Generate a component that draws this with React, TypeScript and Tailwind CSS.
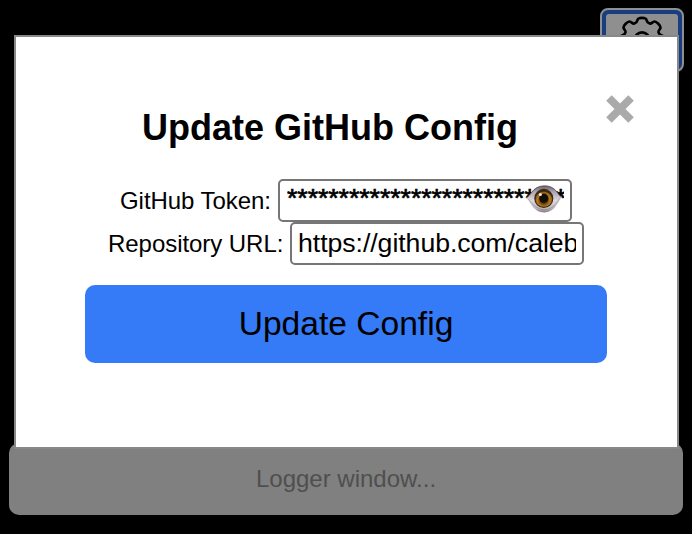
import React, { useState } from "react";

function GearIcon() {
  const quarter =
    "M24 1.8 C27.3 1.8 28.2 2.3 28.7 4.5 C29.1 6.6 30 7 31.6 7.5 C33.6 8.1 34.5 5.6 36.5 5.5 C38.5 5.4 42.6 9.5 42.5 11.5 C42.4 13.5 39.9 14.4 40.5 16.4 C41 18 41.4 18.9 43.5 19.3 C45.7 19.8 46.2 20.7 46.2 24";
  return (
    <svg viewBox="0 0 48 48" className="mt-[2px] h-12 w-12 shrink-0" fill="none" stroke="#000" strokeWidth="2.7" strokeLinejoin="round">
      <path d={quarter} />
      <path d={quarter} transform="rotate(90 24 24)" />
      <path d={quarter} transform="rotate(180 24 24)" />
      <path d={quarter} transform="rotate(270 24 24)" />
      <circle cx="24" cy="24" r="7.6" />
    </svg>
  );
}

function EyeIcon() {
  return (
    <svg viewBox="0 0 36 28" className="h-7 w-9">
      <defs>
        <linearGradient id="sclera" x1="0" y1="0" x2="0" y2="1">
          <stop offset="0" stopColor="#69626b" />
          <stop offset="0.22" stopColor="#aaa2ac" />
          <stop offset="0.55" stopColor="#ded8df" />
          <stop offset="0.85" stopColor="#bdb5bd" />
          <stop offset="1" stopColor="#827a82" />
        </linearGradient>
        <radialGradient id="iris" cx="0.5" cy="0.6" r="0.5">
          <stop offset="0.35" stopColor="#5c3208" />
          <stop offset="0.7" stopColor="#b57d1b" />
          <stop offset="0.88" stopColor="#94621a" />
          <stop offset="1" stopColor="#3d260c" />
        </radialGradient>
      </defs>
      <path d="M.3 13 Q3 11 5.5 7.5 Q10 1 18.5 .8 Q26.5 .8 31 7 Q33.3 10.7 35.5 12.4 Q34 15 31.5 18.8 Q26.5 27.4 18.5 27.4 Q10 27.4 5.4 20 Q3 16 .3 13Z" fill="url(#sclera)" />
      <path d="M.5 13 Q3 11 5.5 7.5 Q10 1 18.5 .8 Q26.5 .8 31 7 Q33.3 10.7 35.3 12.4" fill="none" stroke="#4f484f" strokeWidth=".8" />
      <path d="M2.5 14 Q9 24.5 18.5 24.8 Q28 24.5 33.5 13.5" fill="none" stroke="#8f828d" strokeWidth=".6" />
      <circle cx="17.8" cy="13.4" r="9" fill="url(#iris)" stroke="#3a2817" strokeWidth="1.1" />
      <circle cx="17.8" cy="13.2" r="4.6" fill="#150d09" />
      <circle cx="14.4" cy="9.6" r="1.5" fill="#f5eee5" />
    </svg>
  );
}

const inputClass =
  "h-[43px] w-[294px] rounded-[5px] border-2 border-[#767676] bg-white py-0 pr-[6px] text-[26.67px] leading-[30px] text-black outline-none";

export default function App() {
  const [token, setToken] = useState("*".repeat(40));
  const [url, setUrl] = useState("https://github.com/calebmwelsh");
  return (
    <div className="relative flex h-[534px] w-[692px] flex-col justify-between overflow-hidden bg-black pt-2 pr-2 pb-[19px] pl-[9px] font-['Liberation_Sans',Arial,sans-serif] text-black">
      <button className="flex h-16 w-[84px] justify-center self-end overflow-hidden rounded-[8px] border-2 border-[#909090] bg-[#183d80]">
        <span className="m-1 flex h-14 w-[72px] justify-center rounded-[3px] bg-[#8f8f8f]">
          <GearIcon />
        </span>
      </button>

      <div className="mr-px flex h-[72px] items-center justify-center rounded-[10px] bg-[#808080] text-2xl text-[#4f4f4f]">
        Logger window...
      </div>

      <div className="absolute top-[35px] left-[14px] flex h-[414px] w-[665px] flex-col border-2 border-[#888888] bg-white pr-[42px]">
        <div className="flex h-[142px] items-start pt-[58px]">
          <h2 className="ml-[126px] w-[376px] pt-[12px] text-[36px] leading-[42px] font-bold whitespace-nowrap">
            Update GitHub Config
          </h2>
          <button aria-label="Close" className="ml-[88px] h-7 w-7 shrink-0">
            <svg viewBox="0 0 28 28" className="h-7 w-7" fill="#aaaaaa">
              <path d="M5.7.2 14 8.5 22.3.2 27.8 5.7 19.5 14l8.3 8.3-5.5 5.5L14 19.5l-8.3 8.3-5.5-5.5L8.5 14 .2 5.7Z" />
            </svg>
          </button>
        </div>

        <label className="flex h-[43px] items-center pl-[102px] text-2xl tracking-[-0.05px] whitespace-nowrap">
          <span className="w-[160px] pl-[2px]">GitHub Token:</span>
          <span className="relative flex">
            <input
              className={inputClass + " pb-[4px] pl-[7px] [-webkit-text-stroke:0.7px_black]"}
              value={token}
              onChange={(e) => setToken(e.target.value)}
            />
            <span className="absolute top-[6px] left-[248px]">
              <EyeIcon />
            </span>
          </span>
        </label>
        <label className="flex h-[43px] items-center pl-[90px] text-2xl tracking-[-0.05px] whitespace-nowrap">
          <span className="w-[184px] pl-[2px]">Repository URL:</span>
          <input className={inputClass + " pl-[6px]"} value={url} onChange={(e) => setUrl(e.target.value)} />
        </label>

        <button className="mt-5 ml-[69px] h-[78px] w-[522px] rounded-[10px] bg-[#357af6] text-[33.6px]">
          Update Config
        </button>
      </div>
    </div>
  );
}
